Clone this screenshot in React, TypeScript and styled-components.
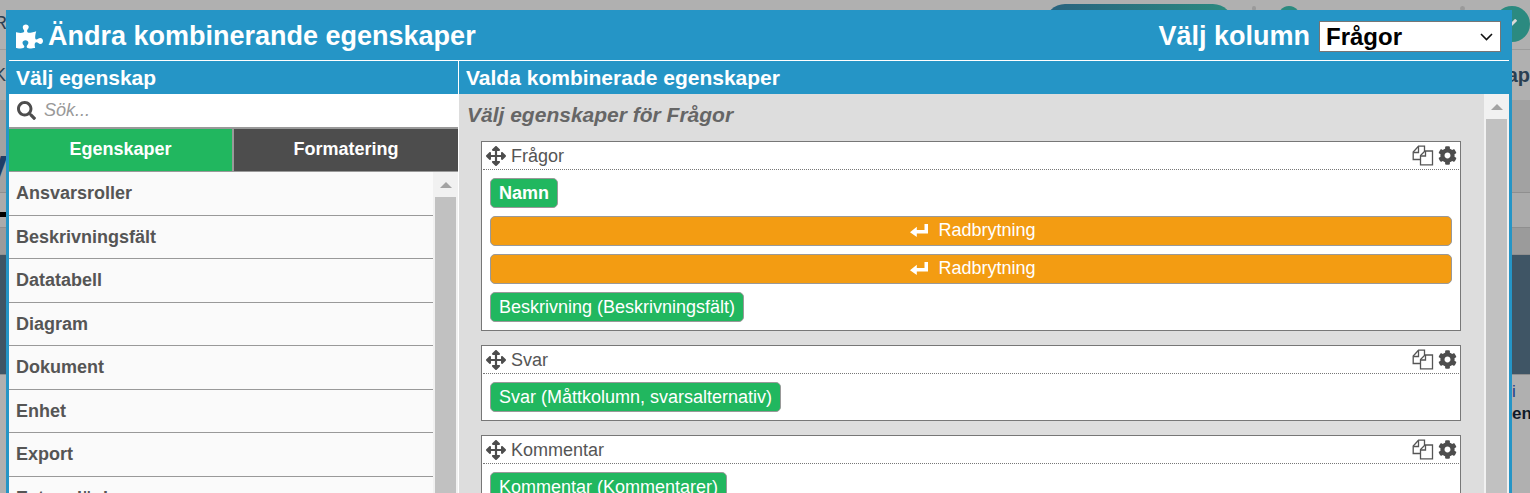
import styled, { createGlobalStyle } from "styled-components";
import { FaCheck, FaCog, FaPuzzlePiece, FaSearch, FaArrowsAlt } from "react-icons/fa";

const FONT = `"Liberation Sans", Arial, sans-serif`;
const BLUE = "#2595c6";

const properties = ["Ansvarsroller", "Beskrivningsfält", "Datatabell", "Diagram", "Dokument", "Enhet", "Export", "Extern länk"];

const groups = [
    {
        title: "Frågor",
        items: [
            { label: "Namn", bold: true },
            { label: "Radbrytning", lineBreak: true },
            { label: "Radbrytning", lineBreak: true },
            { label: "Beskrivning (Beskrivningsfält)" },
        ],
    },
    { title: "Svar", items: [{ label: "Svar (Måttkolumn, svarsalternativ)" }] },
    { title: "Kommentar", items: [{ label: "Kommentar (Kommentarer)" }] },
];

function CopyIcon() {
    return (
        <svg width="22" height="21" viewBox="0 0 22 21" fill="none" stroke="#555" strokeWidth="1.3">
            <path d="M8.5 14.5H1.2V7L6.5 1.2H12.5V6" />
            <path d="M1.2 7.5H6.5V1.5" />
            <path d="M8.5 19.8V10.5L13 6H20.5V19.8Z" fill="#fff" />
            <path d="M8.5 11H13.5V6" />
        </svg>
    );
}

function ReturnIcon() {
    return (
        <svg width="18" height="14" viewBox="0 0 18 14" fill="#fff">
            <path d="M0 9.2L6.8 3.8V7H14.5V1H18V10.5H6.8V14Z" />
        </svg>
    );
}

function ScrollBar() {
    return (
        <ScrollTrack>
            <ScrollArrow />
            <ScrollThumb />
        </ScrollTrack>
    );
}

export default function App() {
    return (
        <Page>
            <GlobalStyle />
            <PageTop>
                <PageLetter>R</PageLetter>
                <PagePill />
                <PageDot $left={19} />
                <PageCircle />
                <PageDot $left={159} />
                <PageCheck>
                    <FaCheck size={15} color="#d9d9d9" />
                </PageCheck>
            </PageTop>
            <PageNav>
                <PageLetter>K</PageLetter>
                <PageNavText>ap</PageNavText>
            </PageNav>
            <PageBand $height={93} $color="#a2a2a2">
                <PageHeading>y</PageHeading>
            </PageBand>
            <PageBand $height={35} $color="#ababab">
                <PageRule />
            </PageBand>
            <PageBand $height={27} $color="#9b9b9b" />
            <PageBand $height={120} $color="#3f5565" />
            <PageFoot>
                <span>i</span>
                <b>en</b>
            </PageFoot>

            <Dialog>
                <DialogHeader>
                    <DialogTitle>
                        <FaPuzzlePiece size={27} />
                        Ändra kombinerande egenskaper
                    </DialogTitle>
                    <ColumnPicker>
                        Välj kolumn
                        <SelectWrap>
                            <ColumnSelect defaultValue="Frågor">
                                <option>Frågor</option>
                                <option>Svar</option>
                                <option>Kommentar</option>
                            </ColumnSelect>
                            <SelectChevron width="13" height="8" viewBox="0 0 13 8" fill="none" stroke="#111" strokeWidth="1.6">
                                <path d="M1 1L6.5 6.5L12 1" />
                            </SelectChevron>
                        </SelectWrap>
                    </ColumnPicker>
                </DialogHeader>
                <Columns>
                    <LeftColumn>
                        <SectionTitle>Välj egenskap</SectionTitle>
                        <SearchRow>
                            <FaSearch size={19} color="#4d4d4d" />
                            <SearchInput placeholder="Sök..." />
                        </SearchRow>
                        <Tabs>
                            <Tab $active>Egenskaper</Tab>
                            <Tab>Formatering</Tab>
                        </Tabs>
                        <ListArea>
                            <PropertyList>
                                {properties.map((name) => (
                                    <PropertyItem key={name}>{name}</PropertyItem>
                                ))}
                            </PropertyList>
                            <ScrollBar />
                        </ListArea>
                    </LeftColumn>
                    <RightColumn>
                        <SectionTitle>Valda kombinerade egenskaper</SectionTitle>
                        <RightArea>
                            <GroupsArea>
                                <GroupsHeading>Välj egenskaper för Frågor</GroupsHeading>
                                {groups.map((group) => (
                                    <Group key={group.title}>
                                        <GroupHeader>
                                            <FaArrowsAlt size={20} color="#4d4d4d" />
                                            <GroupName>{group.title}</GroupName>
                                            <GroupTools>
                                                <CopyIcon />
                                                <FaCog size={19} color="#4d4d4d" />
                                            </GroupTools>
                                        </GroupHeader>
                                        <GroupBody>
                                            {group.items.map((item, i) =>
                                                item.lineBreak ? (
                                                    <BreakChip key={i}>
                                                        <ReturnIcon />
                                                        {item.label}
                                                    </BreakChip>
                                                ) : (
                                                    <Chip key={i} $bold={item.bold}>
                                                        {item.label}
                                                    </Chip>
                                                )
                                            )}
                                        </GroupBody>
                                    </Group>
                                ))}
                            </GroupsArea>
                            <ScrollBar />
                        </RightArea>
                    </RightColumn>
                </Columns>
            </Dialog>
        </Page>
    );
}

const GlobalStyle = createGlobalStyle`
    html, body {
        margin: 0;
        height: 100%;
        overflow: hidden;
    }
    * {
        box-sizing: border-box;
    }
`;

const Page = styled.div`
    position: relative;
    width: 1530px;
    height: 493px;
    overflow: hidden;
    background: #b0b0b0;
    font-family: ${FONT};
`;

const PageTop = styled.div`
    height: 50px;
    display: flex;
    align-items: flex-start;
    padding-top: 15px;
    border-bottom: 1px solid #9c9c9c;
`;

const PageLetter = styled.span`
    width: 12px;
    margin-left: -6px;
    font-size: 18px;
    line-height: 17px;
    color: #2a3f52;
`;

const PagePill = styled.div`
    width: 204px;
    height: 40px;
    margin: -11px 0 0 1039px;
    border-radius: 20px;
    background: linear-gradient(90deg, #28627f, #2b8a80);
`;

const PageDot = styled.div<{ $left: number }>`
    width: 5px;
    height: 5px;
    margin: -9px 0 0 ${(p) => p.$left}px;
    border-radius: 50%;
    background: #9a9a9a;
`;

const PageCircle = styled.div`
    width: 26px;
    height: 28px;
    margin: -9px 0 0 21px;
    border-radius: 50%;
    background: #2b8a80;
`;

const PageCheck = styled.div`
    width: 36px;
    height: 36px;
    flex-shrink: 0;
    margin: -9px 0 0 29px;
    padding-right: 5px;
    display: flex;
    align-items: center;
    justify-content: center;
    border-radius: 50%;
    background: #2b8a80;
`;

const PageNav = styled.div`
    height: 50px;
    display: flex;
    align-items: center;
    justify-content: space-between;
    font-size: 20px;
    color: #2a3f52;
`;

const PageNavText = styled.span`
    font-weight: 700;
`;

const PageBand = styled.div<{ $height: number; $color: string }>`
    height: ${(p) => p.$height}px;
    background: ${(p) => p.$color};
    border-bottom: 1px solid #8f8f8f;
    overflow: hidden;
`;

const PageHeading = styled.div`
    margin-top: 40px;
    margin-left: -18px;
    font-size: 46px;
    line-height: 50px;
    font-weight: 700;
    color: #1f3d66;
`;

const PageRule = styled.div`
    width: 100%;
    height: 5px;
    margin-top: 19px;
    background: linear-gradient(90deg, #000 20px, transparent 20px);
`;

const PageFoot = styled.div`
    padding: 6px 0 0 1512px;
    display: flex;
    flex-direction: column;
    font-size: 17px;
    line-height: 22px;
    color: #101a2a;

    span {
        color: #1a3c8c;
    }
`;

const Dialog = styled.div`
    position: absolute;
    top: 10px;
    left: 6px;
    width: 1506px;
    height: 483px;
    display: flex;
    flex-direction: column;
    padding: 0 3px;
    background: ${BLUE};
    color: #fff;
    overflow: hidden;
`;

const DialogHeader = styled.div`
    height: 51px;
    flex-shrink: 0;
    display: flex;
    align-items: center;
    justify-content: space-between;
    padding: 2px 8px 0 7px;
    border-bottom: 1px solid #fff;
`;

const DialogTitle = styled.h1`
    margin: 0;
    display: flex;
    align-items: center;
    gap: 5px;
    font-size: 27px;
    font-weight: 700;
`;

const ColumnPicker = styled.label`
    display: flex;
    align-items: center;
    gap: 9px;
    font-size: 27px;
    font-weight: 700;
`;

const SelectWrap = styled.div`
    position: relative;
    display: flex;
`;

const ColumnSelect = styled.select`
    appearance: none;
    width: 182px;
    height: 31px;
    padding-left: 6px;
    font-family: ${FONT};
    font-size: 24px;
    font-weight: 700;
    color: #000;
    background: #fff;
    border: 1px solid #767676;
    border-radius: 0;
`;

const SelectChevron = styled.svg`
    position: absolute;
    top: 12px;
    right: 8px;
    pointer-events: none;
`;

const Columns = styled.div`
    flex: 1;
    min-height: 0;
    display: flex;
`;

const LeftColumn = styled.div`
    width: 450px;
    flex-shrink: 0;
    display: flex;
    flex-direction: column;
    border-right: 1px solid #fff;
`;

const RightColumn = styled.div`
    flex: 1;
    min-width: 0;
    display: flex;
    flex-direction: column;
`;

const SectionTitle = styled.h2`
    height: 33px;
    flex-shrink: 0;
    margin: 0;
    padding: 1px 7px 0;
    font-size: 21px;
    line-height: 32px;
    font-weight: 700;
`;

const SearchRow = styled.div`
    height: 33px;
    flex-shrink: 0;
    display: flex;
    align-items: center;
    gap: 8px;
    padding-left: 8px;
    background: #fff;
`;

const SearchInput = styled.input`
    flex: 1;
    border: none;
    outline: none;
    font-family: ${FONT};
    font-size: 18px;
    font-style: italic;
    padding: 0;

    &::placeholder {
        color: #999;
    }
`;

const Tabs = styled.div`
    height: 45px;
    flex-shrink: 0;
    display: grid;
    grid-template-columns: 223px 1fr;
    gap: 2px;
    padding: 2px 0 1px;
    background: #999;
`;

const Tab = styled.div<{ $active?: boolean }>`
    display: flex;
    align-items: center;
    justify-content: center;
    padding-bottom: 2px;
    font-size: 18px;
    font-weight: 700;
    background: ${(p) => (p.$active ? "#21b75f" : "#4d4d4d")};
`;

const ListArea = styled.div`
    flex: 1;
    min-height: 0;
    display: flex;
    background: #fafafa;
`;

const PropertyList = styled.div`
    flex: 1;
    min-width: 0;
    overflow: hidden;
`;

const PropertyItem = styled.div`
    height: 43.5px;
    padding: 1px 0 0 7px;
    display: flex;
    align-items: center;
    font-size: 18px;
    font-weight: 700;
    color: #555;
    border-bottom: 1px solid #999;
`;

const ScrollTrack = styled.div`
    width: 25px;
    flex-shrink: 0;
    display: flex;
    flex-direction: column;
    align-items: center;
    background: #f1f1f1;
`;

const ScrollArrow = styled.div`
    height: 25px;
    flex-shrink: 0;
    display: flex;
    align-items: center;

    &::before {
        content: "";
        border: 6px solid transparent;
        border-top: none;
        border-bottom: 6px solid #a3a3a3;
    }
`;

const ScrollThumb = styled.div`
    flex: 1;
    width: 21px;
    background: #c1c1c1;
`;

const RightArea = styled.div`
    flex: 1;
    min-height: 0;
    display: flex;
    background: #ddd;
`;

const GroupsArea = styled.div`
    flex: 1;
    min-width: 0;
    overflow: hidden;
    padding: 0 23px 0 8px;
    color: #555;
`;

const GroupsHeading = styled.h3`
    height: 47px;
    margin: 0;
    padding-top: 9px;
    font-size: 21px;
    line-height: 24px;
    font-style: italic;
    font-weight: 700;
    color: #666;
`;

const Group = styled.section`
    margin: 0 0 14px 14px;
    background: #fff;
    border: 1px solid #777;
`;

const GroupHeader = styled.div`
    height: 28px;
    margin: 0 1px;
    display: flex;
    align-items: center;
    padding: 1px 2px 0 3px;
    border-bottom: 1px dotted #777;
`;

const GroupName = styled.span`
    margin: 1px 0 0 5px;
    font-size: 18px;
`;

const GroupTools = styled.div`
    margin: -1px 0 0 auto;
    display: flex;
    align-items: center;
    gap: 4px;
`;

const GroupBody = styled.div`
    display: flex;
    flex-direction: column;
    align-items: flex-start;
    gap: 8px;
    padding: 8px;
`;

const Chip = styled.div<{ $bold?: boolean }>`
    height: 30px;
    padding: 0 8px;
    display: flex;
    align-items: center;
    font-size: 18px;
    font-weight: ${(p) => (p.$bold ? 700 : 400)};
    color: #fff;
    background: #21b75f;
    border: 1px solid #999;
    border-radius: 5px;
`;

const BreakChip = styled(Chip)`
    width: 100%;
    justify-content: center;
    gap: 10px;
    padding: 0 4px 2px 8px;
    background: #f39c12;
`;
